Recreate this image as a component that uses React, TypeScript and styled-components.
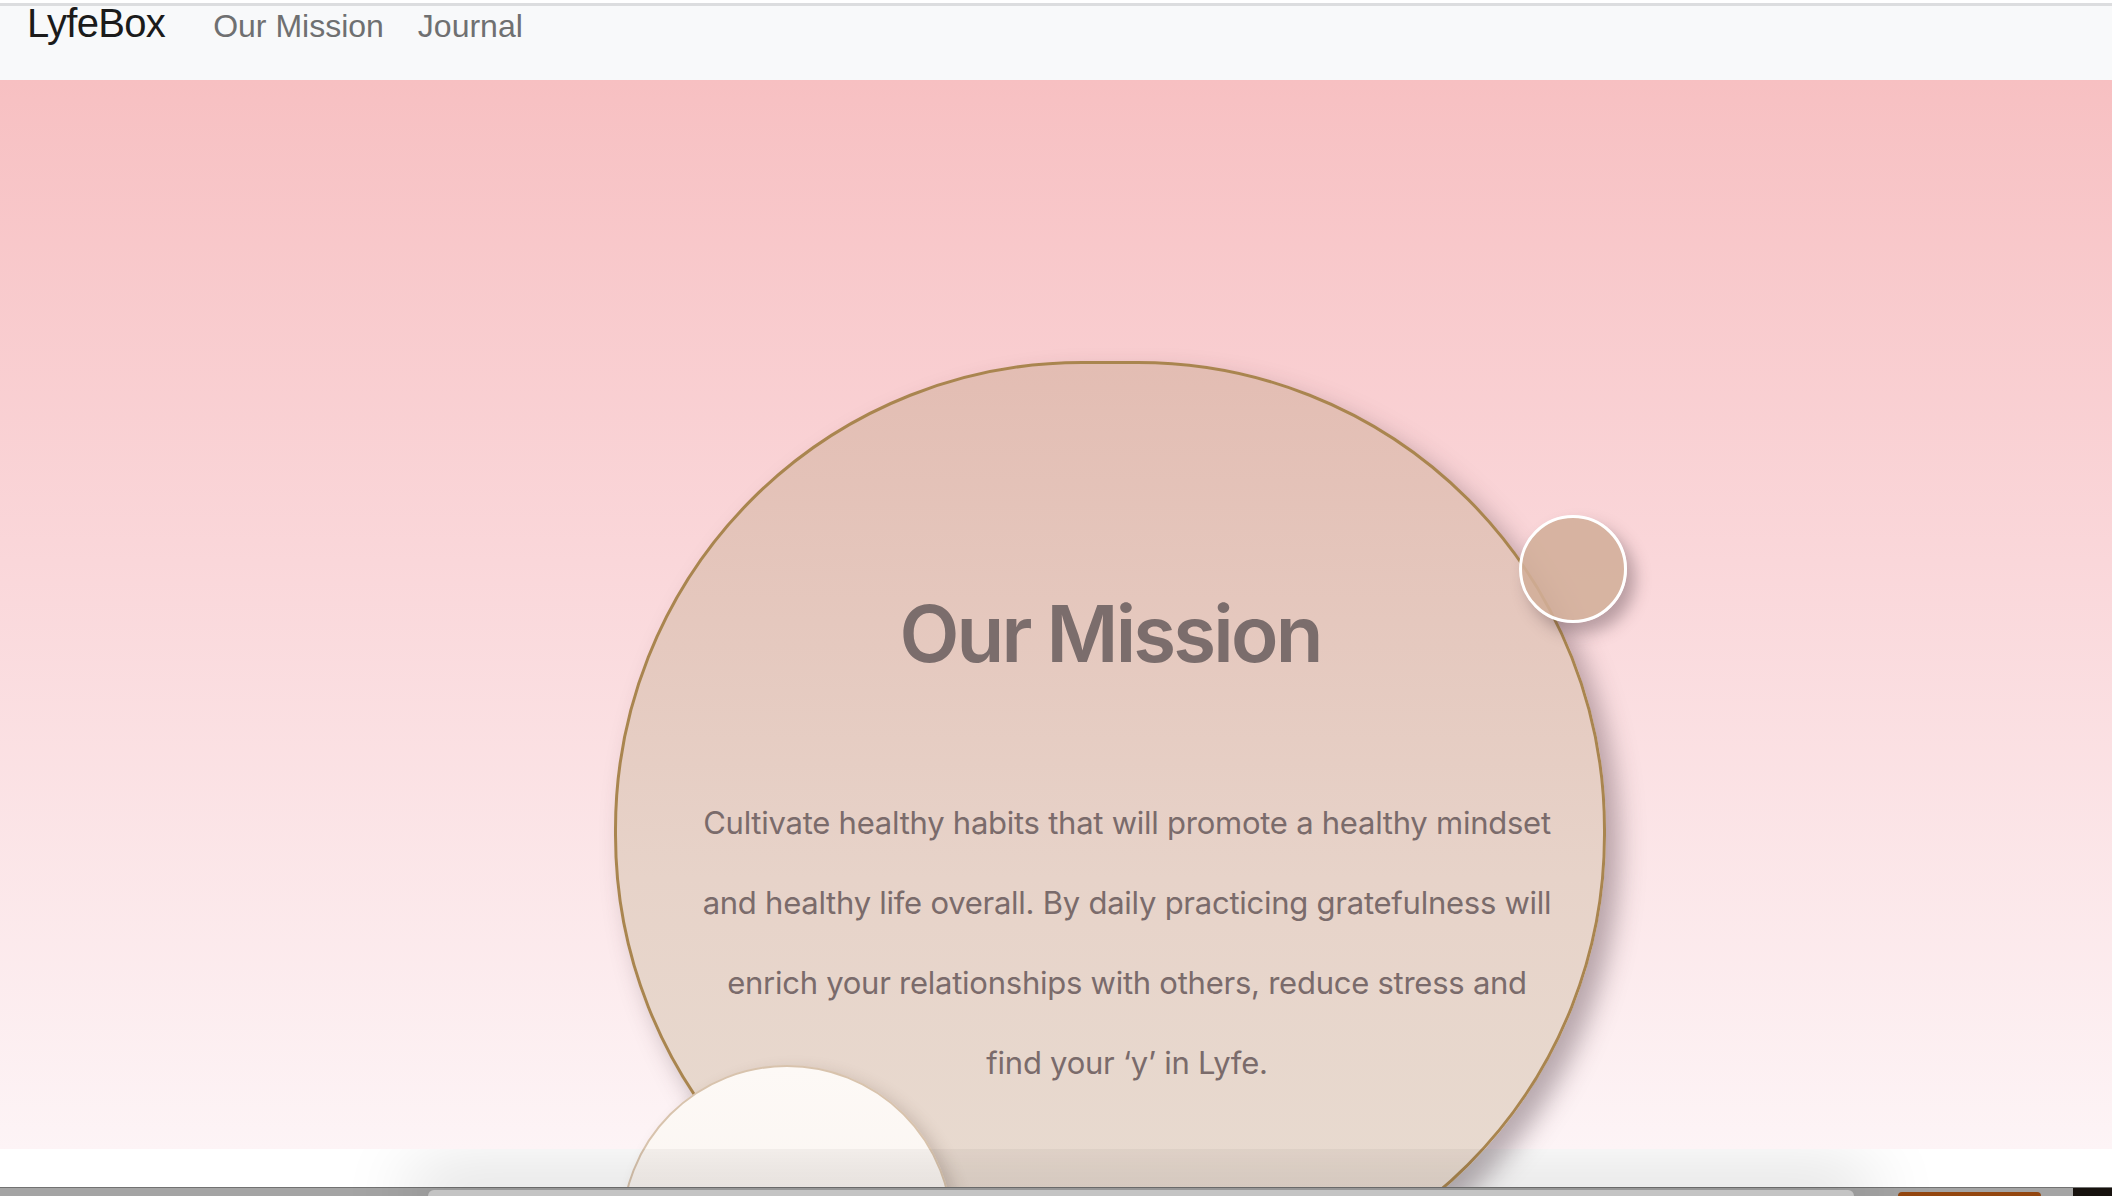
import styled, { createGlobalStyle } from 'styled-components';

const GlobalStyle = createGlobalStyle`
  html, body {
    margin: 0;
    padding: 0;
    background: #ffffff;
  }
  body {
    font-family: Inter, "Liberation Sans", Arial, sans-serif;
  }
  * { box-sizing: border-box; }
`

const Page = styled.div`
  height: 100vh;
  overflow: hidden;
  display: flex;
  flex-direction: column;
  padding-top: 3px;
`

const Navbar = styled.nav`
  flex: 0 0 77px;
  background-color: #f8f9fa;
  border-top: 3px solid #dcdddf;
  display: flex;
  align-items: baseline;
  padding: 2px 27px 0;
  line-height: 30px;
  font-family: "Liberation Sans", Arial, sans-serif;
`

const Brand = styled.a`
  font-size: 40px;
  color: #1b1b1b;
  text-decoration: none;
  margin-right: 48px;
  letter-spacing: -0.7px;
`

const NavLink = styled.a`
  font-size: 32px;
  color: #6f7071;
  text-decoration: none;
  margin-right: 34px;
`

const Hero = styled.section`
  flex: 0 0 1069px;
  min-height: 0;
  position: relative;
  z-index: 1;
  background: linear-gradient(180deg, #f7c0c2 0%, #fad7da 45%, #fdf4f6 100%);
  display: flex;
  justify-content: center;
  align-items: flex-start;
  padding: 281px 0 0 108px;
`

const MissionCircle = styled.div`
  position: relative;
  flex: 0 0 992px;
  width: 992px;
  height: 942px;
  border-radius: 468px;
  border: 3px solid #a9854f;
  background: linear-gradient(180deg, #e3bdb3 0%, #e7d3c9 55%, #e8ddd2 100%);
  box-shadow: 13px 15px 26px rgba(70, 50, 60, 0.38);
  display: flex;
  flex-direction: column;
  align-items: center;
  padding-top: 230px;
`

const Title = styled.h1`
  margin: 0;
  font-size: 78px;
  line-height: 80px;
  font-weight: 600;
  color: #7b6d6c;
  letter-spacing: -2.8px;
`

const Text = styled.p`
  margin: 109px 0 0;
  padding-left: 34px;
  font-size: 31px;
  line-height: 80px;
  color: #7a6b6b;
  text-align: center;
  letter-spacing: -0.25px;
`

const Line = styled.span`
  display: block;
  white-space: nowrap;
`

const Bubble = styled.div<{ $size: number; $left: number; $top: number; $tone: 'rose' | 'pearl' }>`
  position: absolute;
  left: ${p => p.$left}px;
  top: ${p => p.$top}px;
  width: ${p => p.$size}px;
  height: ${p => p.$size}px;
  border-radius: 50%;
  border: ${p => (p.$tone === 'rose' ? '3px solid #ffffff' : '2px solid #d8c3ad')};
  background: ${p =>
    p.$tone === 'rose'
      ? 'rgba(210, 174, 152, 0.88)'
      : 'linear-gradient(180deg, #fdf9f6 0%, #f8f1ec 100%)'};
  box-shadow: ${p =>
    p.$tone === 'rose'
      ? '8px 10px 16px rgba(60, 40, 50, 0.34)'
      : '8px 6px 16px rgba(80, 60, 50, 0.22)'};
`

const Footer = styled.footer`
  flex: 1;
  min-height: 0;
  position: relative;
  z-index: 2;
  overflow: hidden;
  display: flex;
  align-items: flex-end;
`

const Dock = styled.div`
  width: 100%;
  height: 9px;
  background: #a4a4a4;
  border-top: 1px solid #727272;
  display: flex;
  align-items: flex-end;
  padding-left: 428px;
`

const DockShelf = styled.div`
  width: 1426px;
  height: 6px;
  background: #c4c4c4;
  border-radius: 10px 10px 0 0;
  box-shadow: 0 0 70px 18px rgba(0, 0, 0, 0.17);
`

const DockTab = styled.div`
  width: 143px;
  height: 4px;
  margin-left: 44px;
  background: #93460f;
  border-radius: 6px 6px 0 0;
`

const DockCorner = styled.div`
  width: 39px;
  height: 8px;
  margin-left: auto;
  background: #17120e;
`

export default function App() {
  return (
    <>
      <GlobalStyle />
      <Page>
        <Navbar>
          <Brand href="#">LyfeBox</Brand>
          <NavLink href="#">Our Mission</NavLink>
          <NavLink href="#">Journal</NavLink>
        </Navbar>
        <Hero>
          <MissionCircle>
            <Title>Our Mission</Title>
            <Text>
              <Line>Cultivate healthy habits that will promote a healthy mindset</Line>
              <Line>and healthy life overall. By daily practicing gratefulness will</Line>
              <Line>enrich your relationships with others, reduce stress and</Line>
              <Line>find your ‘y’ in Lyfe.</Line>
            </Text>
            <Bubble $tone="rose" $size={108} $left={902} $top={151} />
            <Bubble $tone="pearl" $size={332} $left={4} $top={701} />
          </MissionCircle>
        </Hero>
        <Footer>
          <Dock>
            <DockShelf />
            <DockTab />
            <DockCorner />
          </Dock>
        </Footer>
      </Page>
    </>
  );
}
